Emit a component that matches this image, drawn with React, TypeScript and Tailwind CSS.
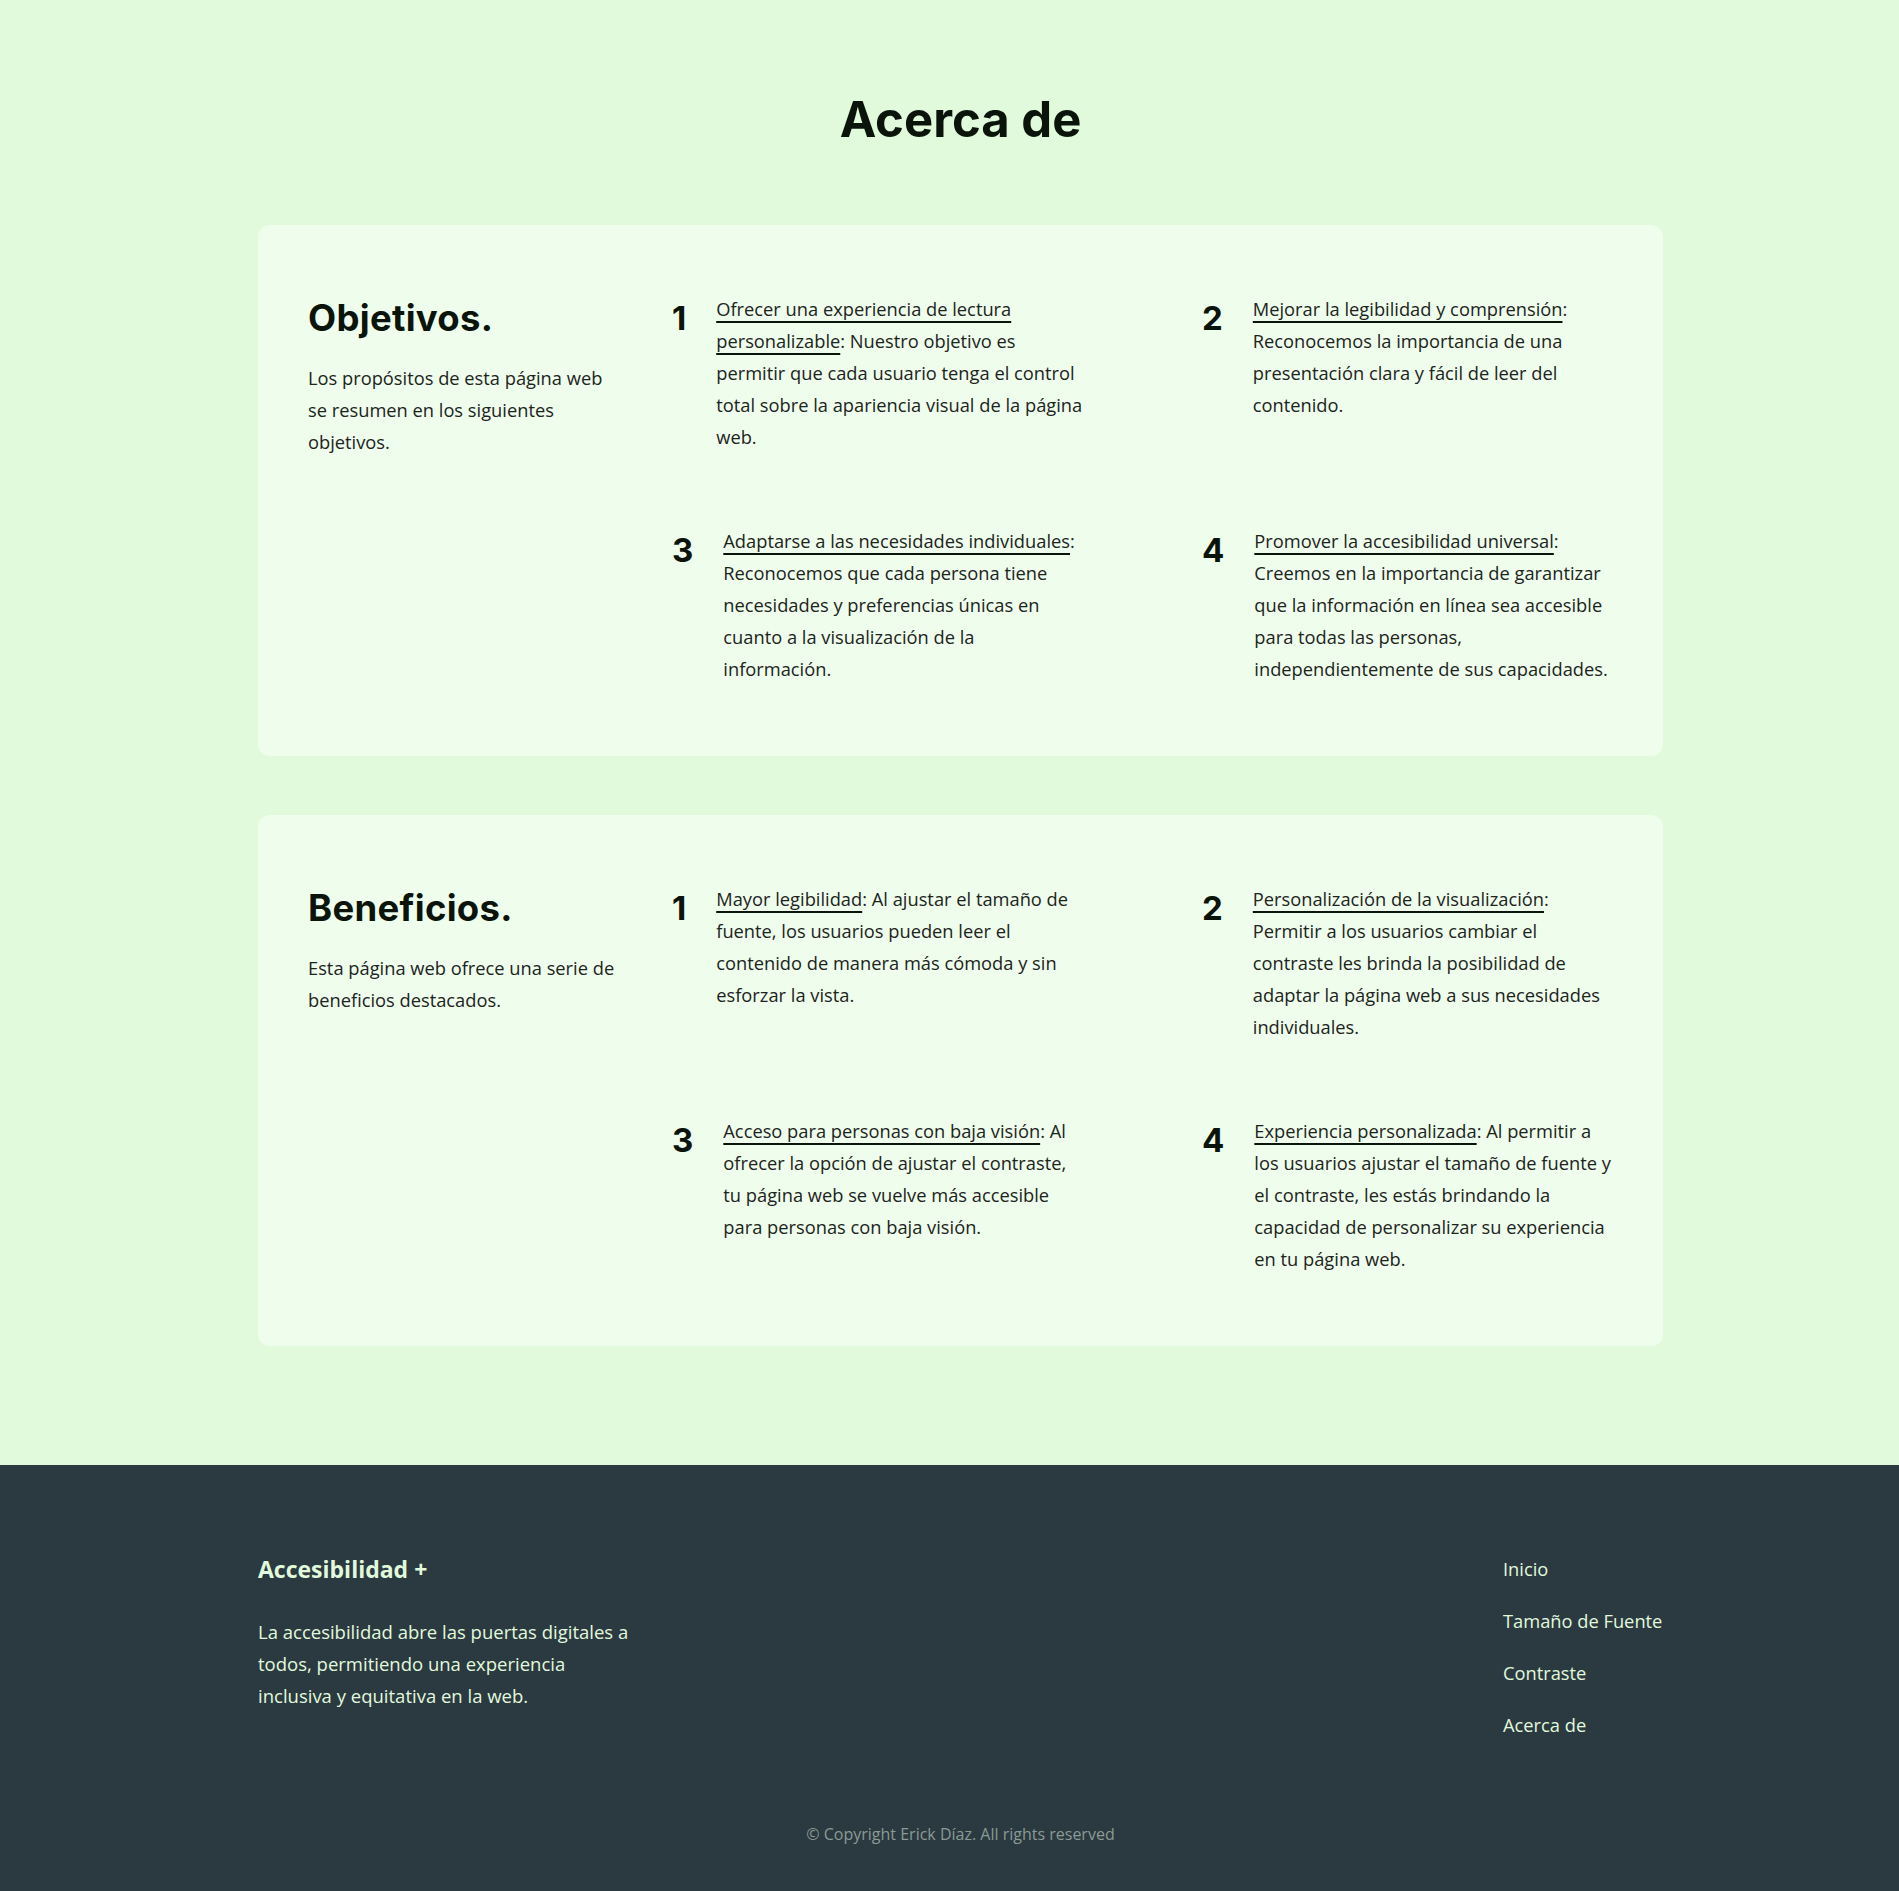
const heading = "font-['Inter',sans-serif] font-bold text-[#0a140a]";
const body = "font-['Open_Sans',sans-serif] text-[18.3px] leading-[32px] text-[#1c241c]";

type Item = { n: string; title: string; text: string };

const objetivos: Item[] = [
  {
    n: "1",
    title: "Ofrecer una experiencia de lectura personalizable",
    text: ": Nuestro objetivo es permitir que cada usuario tenga el control total sobre la apariencia visual de la página web.",
  },
  {
    n: "2",
    title: "Mejorar la legibilidad y comprensión",
    text: ": Reconocemos la importancia de una presentación clara y fácil de leer del contenido.",
  },
  {
    n: "3",
    title: "Adaptarse a las necesidades individuales",
    text: ": Reconocemos que cada persona tiene necesidades y preferencias únicas en cuanto a la visualización de la información.",
  },
  {
    n: "4",
    title: "Promover la accesibilidad universal",
    text: ": Creemos en la importancia de garantizar que la información en línea sea accesible para todas las personas, independientemente de sus capacidades.",
  },
];

const beneficios: Item[] = [
  {
    n: "1",
    title: "Mayor legibilidad",
    text: ": Al ajustar el tamaño de fuente, los usuarios pueden leer el contenido de manera más cómoda y sin esforzar la vista.",
  },
  {
    n: "2",
    title: "Personalización de la visualización",
    text: ": Permitir a los usuarios cambiar el contraste les brinda la posibilidad de adaptar la página web a sus necesidades individuales.",
  },
  {
    n: "3",
    title: "Acceso para personas con baja visión",
    text: ": Al ofrecer la opción de ajustar el contraste, tu página web se vuelve más accesible para personas con baja visión.",
  },
  {
    n: "4",
    title: "Experiencia personalizada",
    text: ": Al permitir a los usuarios ajustar el tamaño de fuente y el contraste, les estás brindando la capacidad de personalizar su experiencia en tu página web.",
  },
];

const Card = ({ title, desc, items }: { title: string; desc: string; items: Item[] }) => {
  return (
    <section className="flex rounded-xl bg-[#effdec] px-[50px] pt-[66px] pb-[71px]">
      <div className="w-[364px] shrink-0 pt-[5px] pr-[54px]">
        <h2 className={`${heading} text-[36.5px] leading-[44px] tracking-[0.3px]`}>{title}</h2>
        <p className={`${body} mt-[22px]`}>{desc}</p>
      </div>
      <div className="grid grid-cols-[412px_412px] gap-x-[118px] gap-y-[70px]">
        {items.map((it) => (
          <div key={it.n} className="flex gap-[30px]">
            <span className={`${heading} pt-[5px] text-[33px] leading-[44px]`}>{it.n}</span>
            <p className={`${body} pt-[2px]`}>
              <span className="underline decoration-[#0a140a] decoration-2 underline-offset-[5px]">
                {it.title}
              </span>
              {it.text}
            </p>
          </div>
        ))}
      </div>
    </section>
  );
};

export default function App() {
  return (
    <div className="flex min-h-[1891px] flex-col bg-[#e1fadc]">
      <main className="pl-[258px] pt-[92px] pb-[119px]">
        <div className="flex w-[1405px] flex-col gap-[59px]">
          <h1 className={`${heading} mb-[18px] text-center text-[49px] leading-[56px]`}>Acerca de</h1>
          <Card
            title="Objetivos."
            desc="Los propósitos de esta página web se resumen en los siguientes objetivos."
            items={objetivos}
          />
          <Card
            title="Beneficios."
            desc="Esta página web ofrece una serie de beneficios destacados."
            items={beneficios}
          />
        </div>
      </main>
      <footer className="flex-1 bg-[#2b3941] pl-[258px] pt-[88px] pb-[40px] font-['Open_Sans',sans-serif]">
        <div className="flex w-[1405px] justify-between">
          <div className="w-[380px]">
            <h3 className="text-[23px] leading-[32px] font-bold text-[#e1fadc]">Accesibilidad +</h3>
            <p className="mt-[31px] text-[18.5px] leading-[32px] text-[#e1fadc]">
              La accesibilidad abre las puertas digitales a todos, permitiendo una experiencia inclusiva y
              equitativa en la web.
            </p>
          </div>
          <nav className="flex w-[160px] flex-col gap-[20px]">
            {["Inicio", "Tamaño de Fuente", "Contraste", "Acerca de"].map((l) => (
              <a key={l} href="#" className="text-[18.3px] leading-[32px] whitespace-nowrap text-[#e1fadc]">
                {l}
              </a>
            ))}
          </nav>
        </div>
        <p className="mt-[81px] w-[1405px] text-center text-[16px] leading-[24px] text-[#8a9b94]">
          © Copyright Erick Díaz. All rights reserved
        </p>
      </footer>
    </div>
  );
}
